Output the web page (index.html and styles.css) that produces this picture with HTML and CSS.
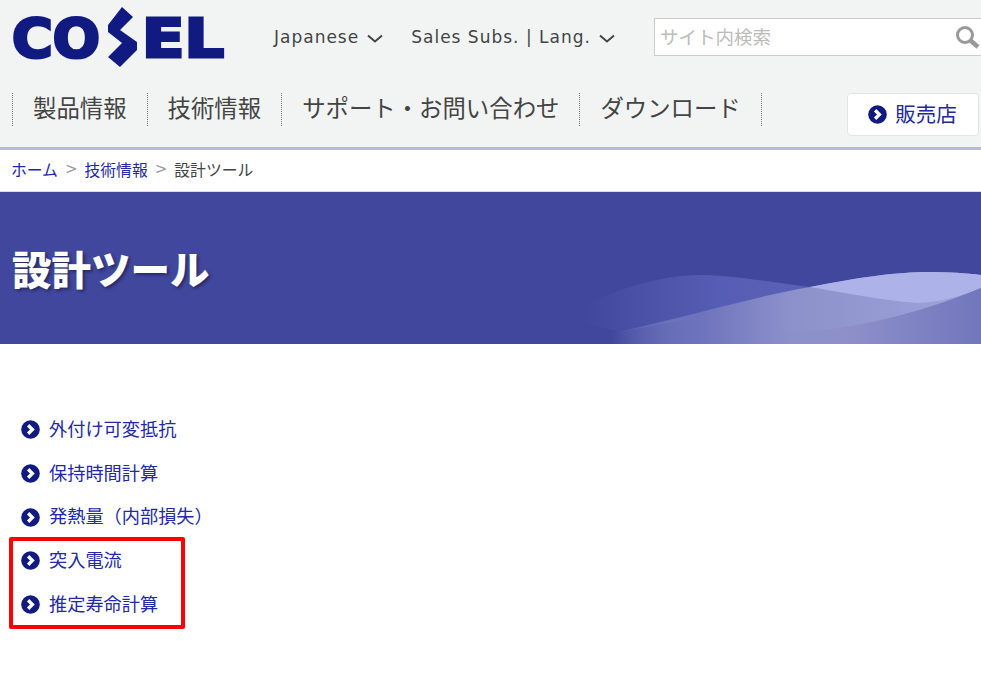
FILE: index.html
```html
<!DOCTYPE html>
<html lang="ja">
<head>
    <meta charset="UTF-8">
    <title>設計ツール | COSEL</title>
    <link rel="stylesheet" href="styles.css">
</head>
<body>
    <svg class="icon-defs" width="0" height="0">
        <symbol id="arrow" viewBox="0 0 20 20">
            <circle cx="10" cy="10" r="9.8" fill="#111a80"/>
            <polyline points="7.5,5.5 12,10 7.5,14.5" fill="none" stroke="#fff" stroke-width="3.5"/>
        </symbol>
        <symbol id="caret" viewBox="0 0 16 9">
            <polyline points="1,1.5 8,7.5 15,1.5" fill="none" stroke="#444" stroke-width="2"/>
        </symbol>
    </svg>

    <header class="site-header">
        <div class="header-top">
            <a class="logo" href="#" aria-label="COSEL">
                <svg width="214" height="62" viewBox="0 0 214 62">
                    <text class="logo-text" x="0" y="50" textLength="88" lengthAdjust="spacingAndGlyphs">CO</text>
                    <polygon fill="#111a80" points="110,0 121,10 108,23 125,35 125,43 108,60 96,50 110,36 96,25 96,18"/>
                    <text class="logo-text" x="130" y="50" textLength="82" lengthAdjust="spacingAndGlyphs">EL</text>
                </svg>
            </a>
            <a class="lang-link lang-first" href="#">Japanese<svg class="caret"><use href="#caret"/></svg></a>
            <a class="lang-link lang-second" href="#">Sales Subs. | Lang.<svg class="caret"><use href="#caret"/></svg></a>
            <div class="search">
                <span class="search-hint">サイト内検索</span>
                <svg class="search-icon" width="25" height="25" viewBox="0 0 25 25">
                    <circle cx="10" cy="10" r="7.5" fill="none" stroke="#999" stroke-width="3"/>
                    <line x1="15.5" y1="15.5" x2="23" y2="22" stroke="#999" stroke-width="4.5"/>
                </svg>
            </div>
        </div>
        <div class="header-nav">
            <nav class="global-nav">
                <a href="#">製品情報</a>
                <a href="#">技術情報</a>
                <a href="#">サポート・お問い合わせ</a>
                <a href="#">ダウンロード</a>
            </nav>
            <a class="dealer-btn" href="#"><svg class="arrow"><use href="#arrow"/></svg>販売店</a>
        </div>
    </header>

    <div class="breadcrumb">
        <a href="#">ホーム</a><span class="sep">&gt;</span><a href="#">技術情報</a><span class="sep">&gt;</span><span>設計ツール</span>
    </div>

    <section class="banner">
        <h1>設計ツール</h1>
        <svg class="banner-wave" width="481" height="152" viewBox="0 0 481 152">
            <defs>
                <linearGradient id="waveBack" x1="0" x2="1" y1="0" y2="0">
                    <stop offset="0.1" stop-color="#5a61b6" stop-opacity="0"/>
                    <stop offset="0.65" stop-color="#565db4"/>
                    <stop offset="1" stop-color="#5a61b6"/>
                </linearGradient>
                <linearGradient id="waveFront" x1="0" x2="1" y1="0" y2="0">
                    <stop offset="0.12" stop-color="#9297d0" stop-opacity="0"/>
                    <stop offset="0.32" stop-color="#6c72bb"/>
                    <stop offset="0.55" stop-color="#8d91cb"/>
                    <stop offset="1" stop-color="#a0a4da"/>
                </linearGradient>
                <linearGradient id="waveLow" x1="0" x2="1" y1="0" y2="0">
                    <stop offset="0" stop-color="#8a8dc6" stop-opacity="0"/>
                    <stop offset="0.4" stop-color="#8c8fc8"/>
                    <stop offset="1" stop-color="#7276bd"/>
                </linearGradient>
            </defs>
            <path fill="url(#waveBack)" d="M60 125 C110 98 160 83 200 83 C230 83 270 90 310 95 L200 125 L120 140 Z"/>
            <path fill="url(#waveFront)" d="M60 152 C180 128 250 105 310 95 C360 85 400 80 427 80 C450 80 465 81 481 83 L481 152 Z"/>
            <path fill="#adb2e8" d="M310 95 C360 85 400 80 427 80 C450 80 465 81 481 83 L481 96 C460 105 440 110 417 111 C380 108 340 100 310 95 Z"/>
            <path fill="url(#waveLow)" d="M267 141 C340 141 410 125 481 96 L481 152 L267 152 Z"/>
        </svg>
    </section>

    <main class="tools">
        <ul class="tool-list">
            <li><a href="#"><svg class="arrow"><use href="#arrow"/></svg>外付け可変抵抗</a></li>
            <li><a href="#"><svg class="arrow"><use href="#arrow"/></svg>保持時間計算</a></li>
            <li><a href="#"><svg class="arrow"><use href="#arrow"/></svg>発熱量（内部損失）</a></li>
            <li><a href="#"><svg class="arrow"><use href="#arrow"/></svg>突入電流</a></li>
            <li><a href="#"><svg class="arrow"><use href="#arrow"/></svg>推定寿命計算</a></li>
        </ul>
        <div class="highlight"></div>
    </main>
</body>
</html>
```

FILE: styles.css
```css
html, body {
    margin: 0;
    padding: 0;
}
body {
    font-family: "Noto Sans CJK JP", "DejaVu Sans", sans-serif;
    color: #444;
    background: #fff;
}
a {
    color: inherit;
    text-decoration: none;
}
.icon-defs {
    position: absolute;
}

/* header */
.site-header {
    background: #f2f4f4;
    height: 147px;
    border-bottom: 3px solid #b9b9de;
}
.header-top {
    display: flex;
    align-items: flex-start;
    height: 93px;
    padding-left: 12px;
}
.logo {
    display: block;
    margin-top: 7px;
    height: 62px;
}
.logo-text {
    font-family: "DejaVu Sans", sans-serif;
    font-weight: bold;
    font-size: 53px;
    fill: #111a80;
    stroke: #111a80;
    stroke-width: 3px;
}
.lang-link {
    display: flex;
    align-items: center;
    gap: 8px;
    height: 38px;
    margin-top: 18px;
    font-family: "DejaVu Sans", sans-serif;
    font-size: 17px;
    letter-spacing: 1px;
    white-space: pre;
}
.lang-first {
    margin-left: 48px;
}
.lang-second {
    margin-left: 28px;
}
.caret {
    width: 16px;
    height: 9px;
    margin-top: 3px;
}
.search {
    display: flex;
    align-items: center;
    justify-content: space-between;
    box-sizing: border-box;
    width: 327px;
    height: 38px;
    margin: 18px 0 0 auto;
    padding: 0 1px 0 5px;
    background: #fff;
    border: 1px solid #ccc;
    border-right: 0;
}
.search-hint {
    padding-bottom: 2px;
    font-size: 18.5px;
    color: #bbb;
}

/* nav row */
.header-nav {
    display: flex;
    justify-content: space-between;
    padding: 0 2px 0 12px;
}
.global-nav {
    display: flex;
    height: 33px;
    border-right: 1px dotted #777;
}
.global-nav a {
    padding: 0 20px;
    border-left: 1px dotted #777;
    font-size: 23.4px;
    line-height: 29px;
}
.dealer-btn {
    display: flex;
    align-items: center;
    justify-content: center;
    gap: 8px;
    box-sizing: border-box;
    width: 132px;
    height: 43px;
    padding: 0 0 3px 0;
    background: #fff;
    border: 1px solid #e4e4e4;
    border-radius: 4px;
    font-size: 20.5px;
    color: #22289a;
}
.arrow {
    flex: none;
    width: 19px;
    height: 19px;
}
.dealer-btn .arrow {
    margin: 2px 0 0 -1px;
}

/* breadcrumb */
.breadcrumb {
    display: flex;
    align-items: center;
    box-sizing: border-box;
    height: 42px;
    padding: 0 0 3px 11px;
    border-bottom: 1px solid #ddd;
    font-size: 15.8px;
}
.breadcrumb a {
    color: #2228a8;
}
.sep {
    margin: 0 7px;
    color: #999;
    font-family: "DejaVu Sans", sans-serif;
    font-size: 15px;
}

/* title banner */
.banner {
    position: relative;
    display: flex;
    align-items: center;
    height: 152px;
    padding-left: 12px;
    background: #40479c;
    overflow: hidden;
}
.banner h1 {
    margin: 0 0 2px;
    font-size: 39.5px;
    font-weight: 800;
    color: #fff;
    text-shadow: 2px 2px 3px #262a66;
}
.banner-wave {
    position: absolute;
    right: 0;
    top: 0;
}

/* tool links */
.tools {
    position: relative;
    height: 332px;
}
.tool-list {
    list-style: none;
    margin: 0;
    padding: 63px 0 0 21px;
}
.tool-list li {
    height: 43.7px;
}
.tool-list a {
    display: flex;
    align-items: center;
    gap: 9px;
    box-sizing: border-box;
    height: 43.7px;
    padding-bottom: 2px;
    font-size: 18.2px;
    color: #2228a8;
}
.tool-list .arrow {
    margin-top: 4px;
}
.highlight {
    position: absolute;
    left: 9px;
    top: 193px;
    box-sizing: border-box;
    width: 176px;
    height: 92px;
    border: 4px solid #f00;
    border-radius: 2px;
}
```
